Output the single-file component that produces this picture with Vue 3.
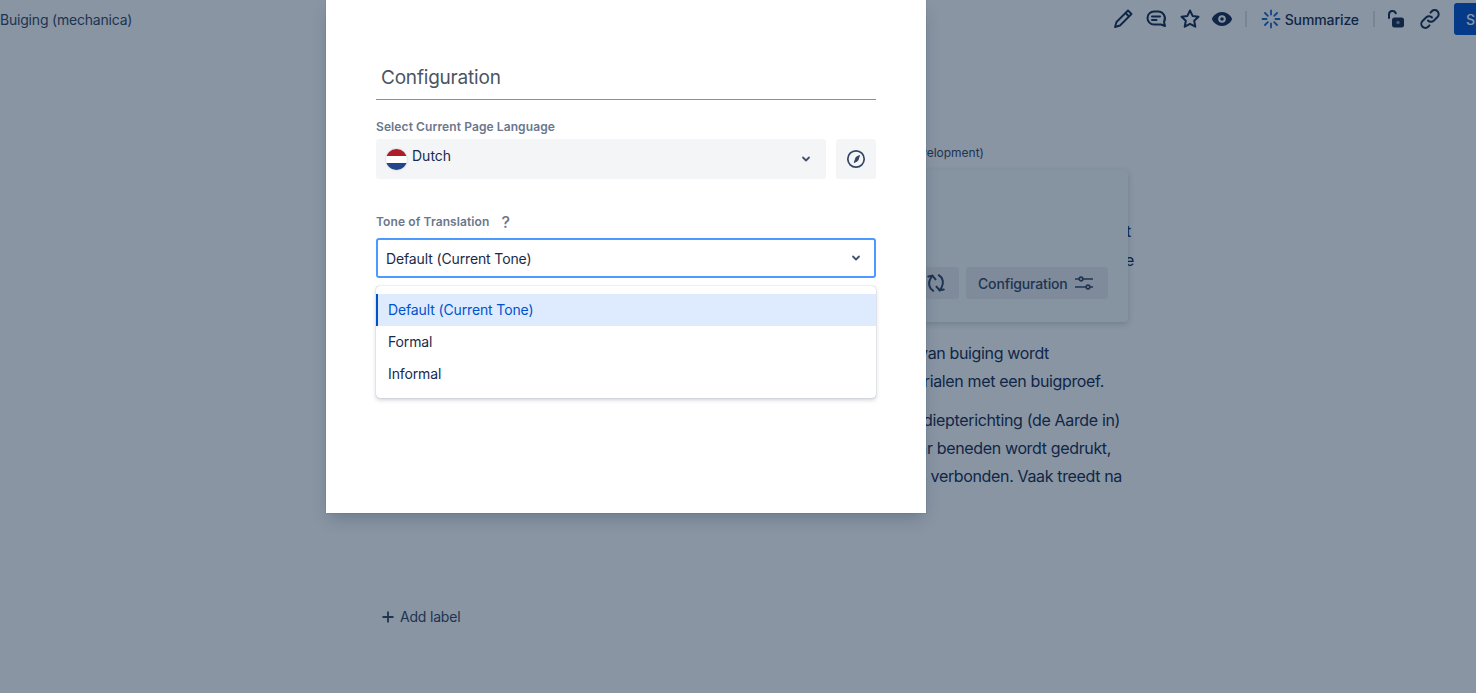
<script setup>
const lead = [
  { text: 'De vertaling van deze pagina is gereed voor gebruik met het huidige project', end: 755 },
  { text: 'en wordt bijgewerkt zodra de inhoud van deze pagina verandert of wijzigt in de', end: 758 }
]
const body = [
  [
    { text: 'Buiging is een vervorming van een constructie, de mate van buiging wordt', end: 673 },
    { text: 'bepaald door de stijfheid van materialen met een buigproef.', end: 728 }
  ],
  [
    { text: 'Een constructie wordt belast in de diepterichting (de Aarde in)', end: 744 },
    { text: 'waarbij een balk in het midden naar beneden wordt gedrukt,', end: 735 },
    { text: 'en daarmee zijn spanningen is verbonden. Vaak treedt na', end: 746 }
  ]
]
</script>

<template>
  <div class="page">
    <header class="topbar">
      <span class="crumb">Buiging (mechanica)</span>
      <div class="actions">
        <button class="icon-btn" aria-label="Edit">
          <svg viewBox="0 0 24 24" width="24" height="24" fill="none" stroke="currentColor" stroke-width="1.900" stroke-linejoin="round"><path d="M17 3.500l3.500 3.500L9 18.500 4 20l1.500-5z" /><path d="M14.500 6l3.500 3.500" /></svg>
        </button>
        <button class="icon-btn chat" aria-label="Comment">
          <svg viewBox="0 0 24 24" width="24" height="24" fill="none" stroke="currentColor" stroke-width="2" stroke-linecap="round" stroke-linejoin="round"><path d="M10 4.500h4a7 7 0 0 1 6 10.500l1 4-4-1.500h-7A6.500 6.500 0 0 1 10 4.500z" /><path d="M8 9.500h8M8 13h4.500" /></svg>
        </button>
        <button class="icon-btn star" aria-label="Star">
          <svg viewBox="0 0 24 24" width="24" height="24" fill="none" stroke="currentColor" stroke-width="2" stroke-linejoin="round"><path d="M12 3.500l2.600 5.400 5.900.8-4.300 4.100 1.100 5.900-5.300-2.900-5.300 2.900 1.100-5.900-4.300-4.100 5.900-.8z" /></svg>
        </button>
        <button class="icon-btn" aria-label="Watch">
          <svg viewBox="0 0 24 24" width="24" height="24"><path fill="currentColor" fill-rule="evenodd" d="M12 5c5.800 0 9.700 4.800 10 7-.3 2.200-4.200 7-10 7S2.300 14.200 2 12c.3-2.200 4.200-7 10-7zM12 8.200a3.800 3.800 0 1 0 0 7.600 3.800 3.800 0 0 0 0-7.600z" /><circle cx="12" cy="12" r="1.800" fill="currentColor" /></svg>
        </button>
        <span class="sep first"></span>
        <button class="summarize">
          <svg viewBox="0 0 20 20" width="20" height="20" fill="none" stroke="#1d62c4" stroke-width="1.800" stroke-linecap="round"><path d="M10 1.500v4M10 14.500v4M1.500 10h4M14.500 10h4M4 4l2.800 2.800M13.200 13.200L16 16M16 4l-2.800 2.800M6.800 13.200L4 16" /></svg>
          <span>Summarize</span>
        </button>
        <span class="sep second"></span>
        <button class="icon-btn" aria-label="Restrictions">
          <svg viewBox="0 0 24 24" width="24" height="24" fill="none"><path d="M5 11V7.500a3.500 3.500 0 0 1 6.800-1.200" stroke="currentColor" stroke-width="2" stroke-linecap="round" /><rect x="8" y="10.500" width="12" height="10" rx="2.500" fill="currentColor" /><circle cx="14" cy="15.500" r="1.700" fill="#8a95a5" /></svg>
        </button>
        <button class="icon-btn link" aria-label="Link">
          <svg viewBox="0 0 24 24" width="24" height="24" fill="none" stroke="currentColor" stroke-width="2" stroke-linecap="round"><path d="M10 13.500a4 4 0 0 0 5.700.3l3.800-3.800a4 4 0 0 0-5.700-5.700l-1.300 1.300" /><path d="M14 10.500a4 4 0 0 0-5.700-.3l-3.800 3.800a4 4 0 0 0 5.700 5.700l1.300-1.300" /></svg>
        </button>
        <button class="share">Share</button>
      </div>
    </header>

    <main class="content">
      <p class="byline">Vertaling door Page Translator (Development)</p>
      <div class="lead-wrap">
        <div class="lead-lines">
          <div v-for="line in lead" :key="line.text" class="line" :style="{ width: line.end + 'px' }">{{ line.text }}</div>
        </div>
        <section class="card">
          <div class="card-actions">
            <button class="ghost" aria-label="Refresh">
              <svg viewBox="0 0 24 24" width="22" height="22" fill="none" stroke="currentColor" stroke-width="2.200" stroke-linecap="round" stroke-linejoin="round"><path d="M15 3.500c4.500 2.500 6 8.500 3 13.500l-2 3" /><path d="M12.500 16l3.500 4 4.500-1" /><path d="M9 20.500c-4.500-2.500-6-8.500-3-13.500l2-3" /><path d="M11.500 8L8 4 3.500 5" /></svg>
            </button>
            <button class="ghost config">
              <span>Configuration</span>
              <svg viewBox="0 0 20 20" width="20" height="20" fill="none" stroke="currentColor" stroke-width="1.700"><path d="M1 6h4M9 6h10M1 14h11M16 14h3" /><circle cx="7" cy="6" r="1.800" /><circle cx="14" cy="14" r="1.800" /></svg>
            </button>
          </div>
        </section>
      </div>
      <div v-for="(para, i) in body" :key="i" class="para">
        <div v-for="line in para" :key="line.text" class="line" :style="{ width: line.end + 'px' }">{{ line.text }}</div>
      </div>
      <button class="add-label">
        <svg viewBox="0 0 16 16" width="16" height="16" fill="none" stroke="currentColor" stroke-width="1.800"><path d="M8 2.500v11M2.500 8h11" /></svg>
        <span>Add label</span>
      </button>
    </main>

    <div class="mask"></div>

    <div class="modal" role="dialog">
      <h2 class="title">Configuration</h2>

      <label class="field-label lang-label">Select Current Page Language</label>
      <div class="lang-row">
        <div class="lang-select">
          <span class="flag"><i class="red"></i><i class="white"></i><i class="blue"></i></span>
          <span class="lang-name">Dutch</span>
          <svg class="chev" viewBox="0 0 12 12" width="12" height="12" fill="none" stroke="#42526e" stroke-width="1.800" stroke-linecap="round" stroke-linejoin="round"><path d="M3 4.500L6 7.500 9 4.500" /></svg>
        </div>
        <button class="compass" aria-label="Detect language">
          <svg viewBox="0 0 20 20" width="20" height="20" fill="none" stroke="#344563" stroke-width="1.700"><circle cx="10" cy="10" r="8.200" /><path fill="#344563" stroke-width="1" stroke-linejoin="round" d="M13.500 6.500l-1.800 5.200-3.400 1.800 1.800-5.200z" /></svg>
        </button>
      </div>

      <div class="tone-head">
        <label class="field-label">Tone of Translation</label>
        <span class="help">?</span>
      </div>
      <div class="tone-wrap">
        <div class="tone-select">
          <span>Default (Current Tone)</span>
          <svg class="chev" viewBox="0 0 12 12" width="12" height="12" fill="none" stroke="#42526e" stroke-width="1.800" stroke-linecap="round" stroke-linejoin="round"><path d="M3 4.500L6 7.500 9 4.500" /></svg>
        </div>
        <ul class="menu">
          <li class="option selected">Default (Current Tone)</li>
          <li class="option">Formal</li>
          <li class="option">Informal</li>
        </ul>
      </div>
    </div>
  </div>
</template>

<style>
html, body { margin: 0; overflow: hidden; }
</style>

<style scoped>
.page {
  position: relative;
  width: 1476px;
  height: 693px;
  overflow: hidden;
  background: #fff;
  color: #172b4d;
  font-family: Inter, "Liberation Sans", sans-serif;
}
button { font: inherit; color: inherit; background: none; border: 0; padding: 0; }
.topbar {
  display: flex;
  align-items: center;
  width: 1530px;
  height: 38px;
}
.crumb { font-size: 14px; letter-spacing: -0.2px; color: #344563; }
.actions {
  margin-left: auto;
  display: flex;
  align-items: center;
  height: 32px;
}
.icon-btn {
  width: 32px;
  height: 32px;
  display: flex;
  align-items: center;
  justify-content: center;
  color: #172b4d;
}
.chat { margin-left: 1px; }
.star { margin-left: 2px; }
.link { margin-left: 2px; }
.sep { width: 2px; height: 16px; background: #dfe1e6; }
.sep.first { margin: 0 14px 0 7px; }
.sep.second { margin: 0 5px 0 14px; }
.summarize {
  display: flex;
  align-items: center;
  gap: 4px;
  font-size: 14px;
  font-weight: 500;
  letter-spacing: -0.1px;
  color: #172b4d;
}
.share {
  margin-left: 8px;
  width: 76px;
  height: 32px;
  border-radius: 3px;
  background: #0052cc;
  color: #fff;
  font-size: 14px;
  font-weight: 500;
  text-align: left;
  padding-left: 12px;
}
.content {
  margin-left: 376px;
  width: 752px;
  font-size: 16px;
  letter-spacing: -0.35px;
}
.byline {
  margin: 108px 0 0;
  font-size: 12px;
  line-height: 14px;
  letter-spacing: 0;
  text-align: right;
  width: 608px;
  color: #344563;
}
.lead-wrap { position: relative; margin: 10px 0 17px; height: 152px; }
.lead-lines { padding-top: 47px; }
.line {
  display: flex;
  justify-content: flex-end;
  white-space: nowrap;
  line-height: 29px;
}
.card {
  position: absolute;
  inset: 0;
  background: #fafbfc;
  border-radius: 4px;
  box-shadow: 0 2px 6px rgba(9, 30, 66, 0.2);
  display: flex;
  justify-content: flex-end;
}
.card-actions {
  display: flex;
  gap: 7px;
  margin: 97px 20px 0 0;
  height: 32px;
}
.ghost {
  height: 32px;
  border-radius: 3px;
  background: #ebecf0;
  color: #344563;
  display: flex;
  align-items: center;
  justify-content: center;
  font-size: 14px;
  font-weight: 500;
  letter-spacing: -0.15px;
  padding: 0 12px;
}
.config { width: 142px; box-sizing: border-box; gap: 6px; justify-content: flex-start; }
.para { margin-top: 11px; }
.para .line { line-height: 28px; }
.add-label {
  display: flex;
  align-items: center;
  gap: 4px;
  margin: 118px 0 0 4px;
  font-size: 14px;
  letter-spacing: -0.2px;
  color: #344563;
}
.mask {
  position: absolute;
  inset: 0;
  background: rgba(9, 34, 62, 0.48);
}
.modal {
  position: absolute;
  left: 326px;
  top: 0;
  width: 600px;
  height: 513px;
  box-sizing: border-box;
  padding: 0 50px;
  background: #fff;
  box-shadow: 0 8px 16px -4px rgba(9, 30, 66, 0.25), 0 0 1px rgba(9, 30, 66, 0.31);
  display: flex;
  flex-direction: column;
}
.title {
  margin: 64px 0 0;
  padding: 0 5px 8px;
  height: 27px;
  font-size: 19px;
  line-height: 27px;
  letter-spacing: -0.2px;
  font-weight: 400;
  color: #4b5563;
  border-bottom: 1px solid #8e8e8e;
  box-sizing: content-box;
}
.field-label {
  font-size: 12px;
  font-weight: 600;
  line-height: 16px;
  letter-spacing: 0.1px;
  color: #6b778c;
}
.lang-label { margin-top: 19px; }
.lang-row { display: flex; gap: 10px; margin-top: 4px; height: 40px; }
.lang-select {
  flex: 1;
  display: flex;
  align-items: center;
  background: #f4f5f7;
  border-radius: 3px;
  padding: 0 14px 0 10px;
}
.flag {
  width: 21px;
  height: 21px;
  border-radius: 50%;
  overflow: hidden;
  display: flex;
  flex-direction: column;
  box-shadow: 0 0 2px rgba(9, 30, 66, 0.25);
}
.flag i { flex: 1; display: block; }
.flag .red { background: #ae1c28; }
.flag .white { background: #fff; }
.flag .blue { background: #21468b; }
.lang-name {
  margin-left: 5px;
  font-size: 14px;
  position: relative;
  top: -4px;
}
.chev { margin-left: auto; }
.compass {
  width: 40px;
  height: 40px;
  border-radius: 3px;
  background: #f4f5f7;
  display: flex;
  align-items: center;
  justify-content: center;
}
.tone-head {
  display: flex;
  align-items: center;
  gap: 12px;
  margin-top: 34px;
  height: 17px;
}
.help { font-size: 16px; font-weight: 500; color: #6b778c; }
.tone-wrap { position: relative; margin-top: 8px; }
.tone-select {
  box-sizing: border-box;
  height: 40px;
  border: 2px solid #4c9aff;
  border-radius: 3px;
  display: flex;
  align-items: center;
  padding: 0 12px 0 8px;
  font-size: 14px;
  letter-spacing: -0.13px;
  color: #172b4d;
}
.menu {
  position: absolute;
  left: 0;
  right: 0;
  top: 48px;
  margin: 0;
  padding: 8px 0;
  list-style: none;
  background: #fff;
  border-radius: 4px;
  box-shadow: 0 2px 4px rgba(9, 30, 66, 0.2), 0 0 1px rgba(9, 30, 66, 0.4);
}
.option {
  height: 32px;
  line-height: 32px;
  padding-left: 12px;
  font-size: 14px;
  letter-spacing: -0.13px;
  color: #172b4d;
}
.option.selected {
  background: #deebff;
  color: #0052cc;
  box-shadow: inset 2px 0 0 #0052cc;
}
</style>
